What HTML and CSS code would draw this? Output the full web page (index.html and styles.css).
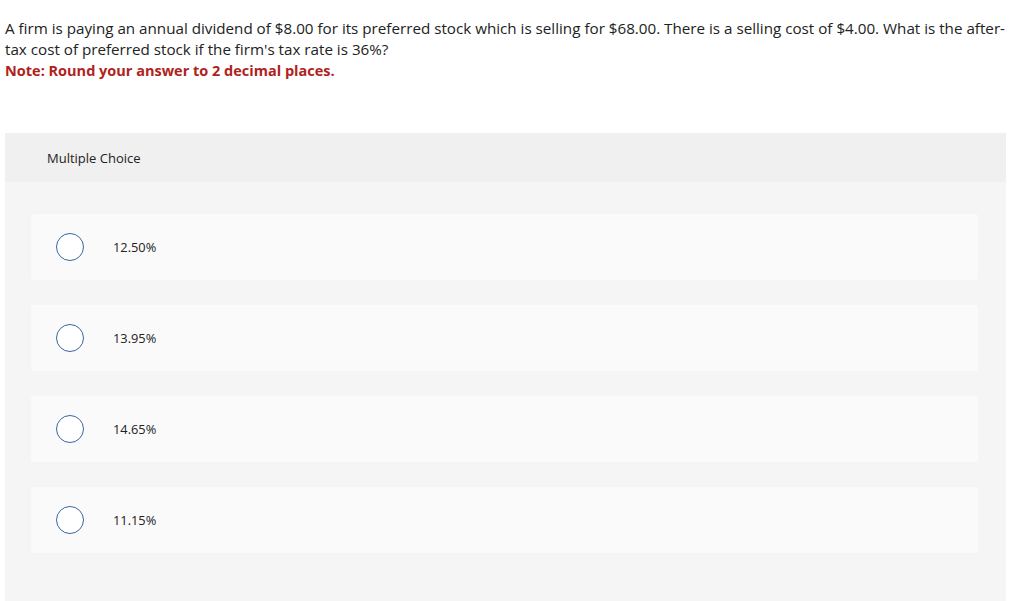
FILE: index.html
```html
<!DOCTYPE html>
<html>
<head>
<meta charset="utf-8">
<link rel="stylesheet" href="styles.css">
</head>
<body>
<div class="page">
  <div class="question">
    <p class="prompt">A firm is paying an annual dividend of $8.00 for its preferred stock which is selling for $68.00. There is a selling cost of $4.00. What is the after-tax cost of preferred stock if the firm's tax rate is 36%?</p>
    <p class="note">Note: Round your answer to 2 decimal places.</p>
  </div>
  <div class="mc">
    <div class="mc-header">Multiple Choice</div>
    <div class="choices">
      <div class="choice"><span class="radio"></span><span class="label">12.50%</span></div>
      <div class="choice"><span class="radio"></span><span class="label">13.95%</span></div>
      <div class="choice"><span class="radio"></span><span class="label">14.65%</span></div>
      <div class="choice"><span class="radio"></span><span class="label">11.15%</span></div>
    </div>
  </div>
</div>
</body>
</html>
```

FILE: styles.css
```css
* { box-sizing: border-box; }
html, body { margin: 0; padding: 0; background: #fff; }
body {
  font-family: "Open Sans", "Liberation Sans", sans-serif;
  color: #222;
}
.page {
  padding: 0 18px 0 5px;
}
.question {
  padding-top: 18px;
  height: 133px;
}
.prompt {
  margin: 0;
  font-size: 15.2px;
  line-height: 21px;
  color: #222;
}
.note {
  margin: 0;
  font-size: 14.5px;
  line-height: 21px;
  font-weight: bold;
  color: #b0221c;
}
.mc {
  background: #f5f5f5;
  height: 480px;
}
.mc-header {
  background: #f0f0f0;
  height: 49px;
  display: flex;
  align-items: center;
  padding-left: 42px;
  font-size: 13px;
  color: #222;
}
.choices {
  padding: 32px 28px 0 26px;
  display: flex;
  flex-direction: column;
  gap: 25px;
}
.choice {
  background: #fafafa;
  height: 66px;
  border-radius: 3px;
  display: flex;
  align-items: center;
  padding-left: 25px;
}
.radio {
  width: 28px;
  height: 28px;
  border-radius: 50%;
  border: 1.3px solid #3a669f;
  background: #fff;
  flex: none;
}
.label {
  margin-left: 29px;
  font-size: 12.8px;
  color: #222;
}
```
